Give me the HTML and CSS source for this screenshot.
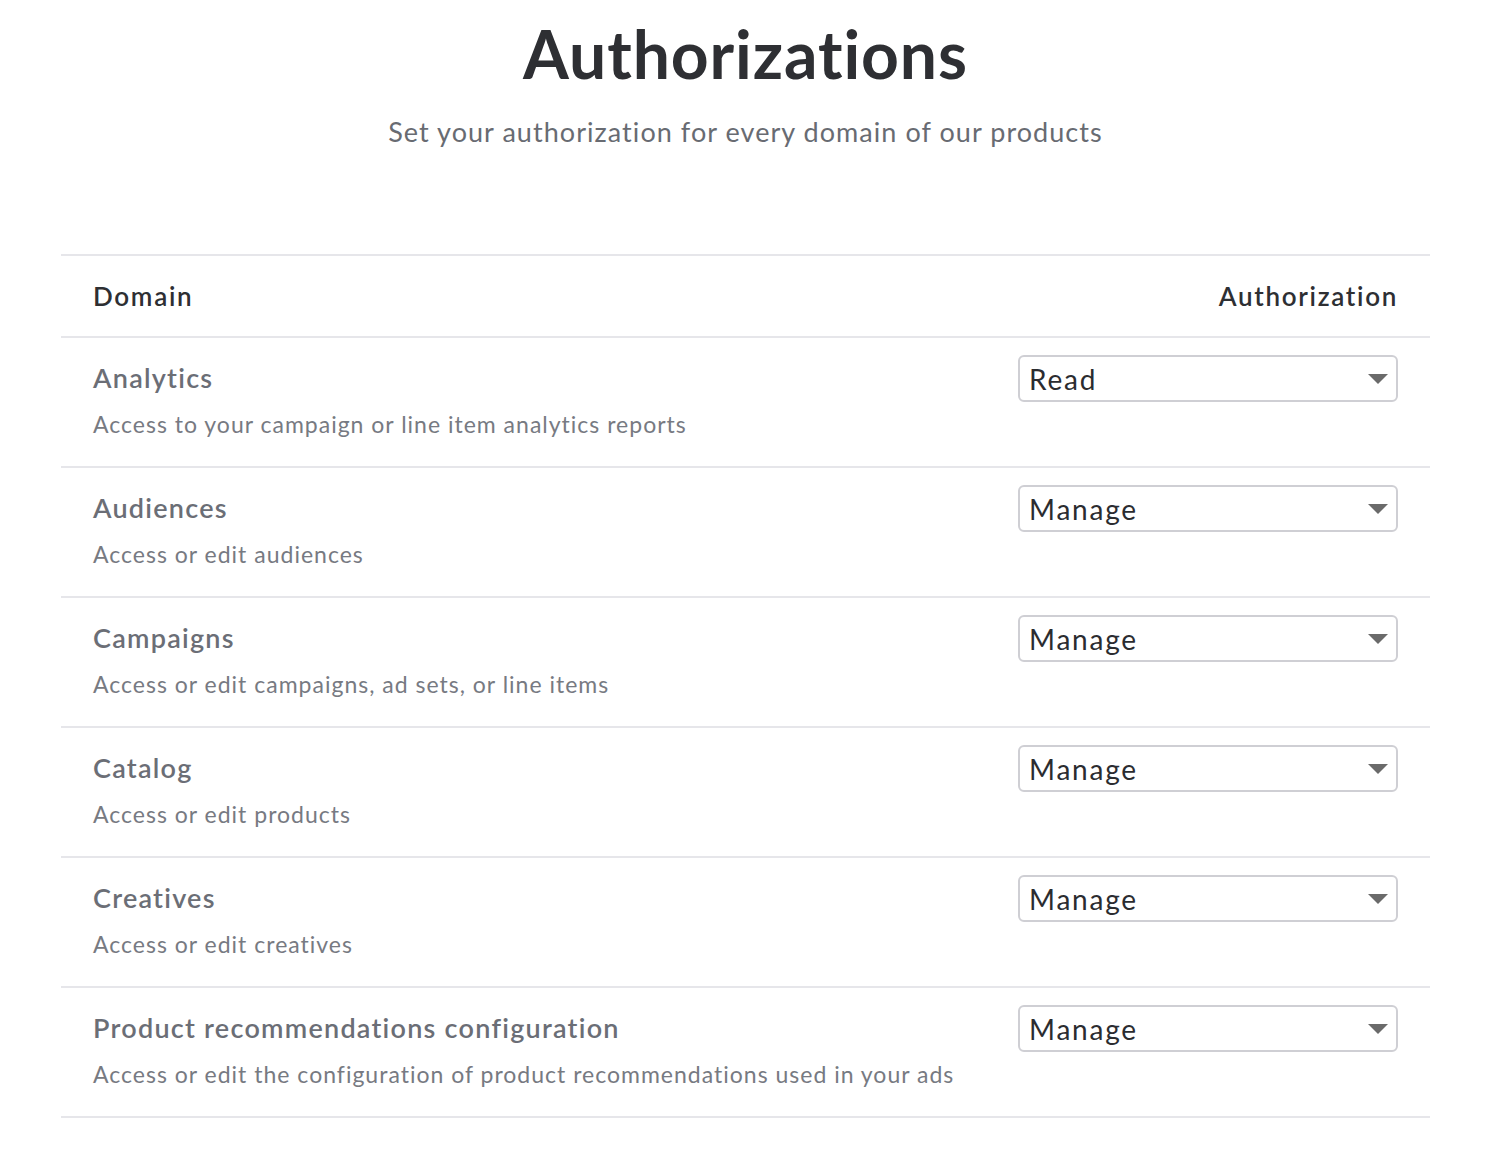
FILE: index.html
```html
<!DOCTYPE html>
<html>
<head>
<meta charset="utf-8">
<link rel="stylesheet" href="styles.css">
</head>
<body>
<div class="page">
  <h1 class="title">Authorizations</h1>
  <p class="subtitle">Set your authorization for every domain of our products</p>
  <div class="table">
    <div class="head">
      <span class="head-cell">Domain</span>
      <span class="head-cell">Authorization</span>
    </div>
    <div class="row">
      <div class="info">
        <div class="name">Analytics</div>
        <div class="desc">Access to your campaign or line item analytics reports</div>
      </div>
      <div class="select"><span>Read</span><span class="caret"></span></div>
    </div>
    <div class="row">
      <div class="info">
        <div class="name">Audiences</div>
        <div class="desc">Access or edit audiences</div>
      </div>
      <div class="select"><span>Manage</span><span class="caret"></span></div>
    </div>
    <div class="row">
      <div class="info">
        <div class="name">Campaigns</div>
        <div class="desc">Access or edit campaigns, ad sets, or line items</div>
      </div>
      <div class="select"><span>Manage</span><span class="caret"></span></div>
    </div>
    <div class="row">
      <div class="info">
        <div class="name">Catalog</div>
        <div class="desc">Access or edit products</div>
      </div>
      <div class="select"><span>Manage</span><span class="caret"></span></div>
    </div>
    <div class="row">
      <div class="info">
        <div class="name">Creatives</div>
        <div class="desc">Access or edit creatives</div>
      </div>
      <div class="select"><span>Manage</span><span class="caret"></span></div>
    </div>
    <div class="row">
      <div class="info">
        <div class="name">Product recommendations configuration</div>
        <div class="desc">Access or edit the configuration of product recommendations used in your ads</div>
      </div>
      <div class="select"><span>Manage</span><span class="caret"></span></div>
    </div>
  </div>
</div>
</body>
</html>
```

FILE: styles.css
```css
* { box-sizing: border-box; }
body {
  margin: 0;
  background: #ffffff;
  font-family: "Lato", "Noto Sans", sans-serif;
}
.page {
  width: 1369px;
  margin-left: 61px;
  padding-top: 14px;
}
.title {
  margin: 0;
  text-align: center;
  font-size: 66px;
  line-height: 80px;
  font-weight: 700;
  letter-spacing: 0.9px;
  color: #2e2f33;
}
.subtitle {
  margin: 18px 0 0;
  text-align: center;
  font-size: 27px;
  line-height: 40px;
  letter-spacing: 1.05px;
  color: #686b72;
}
.table {
  margin-top: 102px;
  border-top: 2px solid #e6e6ea;
}
.head {
  display: flex;
  justify-content: space-between;
  align-items: center;
  height: 82px;
  padding: 0 32px;
  border-bottom: 2px solid #e6e6ea;
}
.head-cell {
  font-size: 26px;
  font-weight: 600;
  letter-spacing: 1.7px;
  color: #2e2f33;
}
.row {
  display: flex;
  justify-content: space-between;
  align-items: flex-start;
  height: 130px;
  padding: 17px 32px 0;
  border-bottom: 2px solid #e6e6ea;
}
.name {
  font-size: 27px;
  line-height: 46px;
  font-weight: 600;
  letter-spacing: 1.25px;
  color: #6b6e76;
}
.desc {
  margin-top: 8px;
  font-size: 23px;
  line-height: 30px;
  letter-spacing: 1px;
  color: #777a82;
}
.select {
  width: 380px;
  height: 47px;
  border: 2px solid #cfcfd4;
  border-radius: 6px;
  display: flex;
  align-items: center;
  justify-content: space-between;
  padding: 0 8px 0 9px;
  font-size: 28px;
  letter-spacing: 1.8px;
  color: #2b2c30;
}
.caret {
  width: 0;
  height: 0;
  border-left: 10px solid transparent;
  border-right: 10px solid transparent;
  border-top: 10px solid #6a6a6a;
}
```
